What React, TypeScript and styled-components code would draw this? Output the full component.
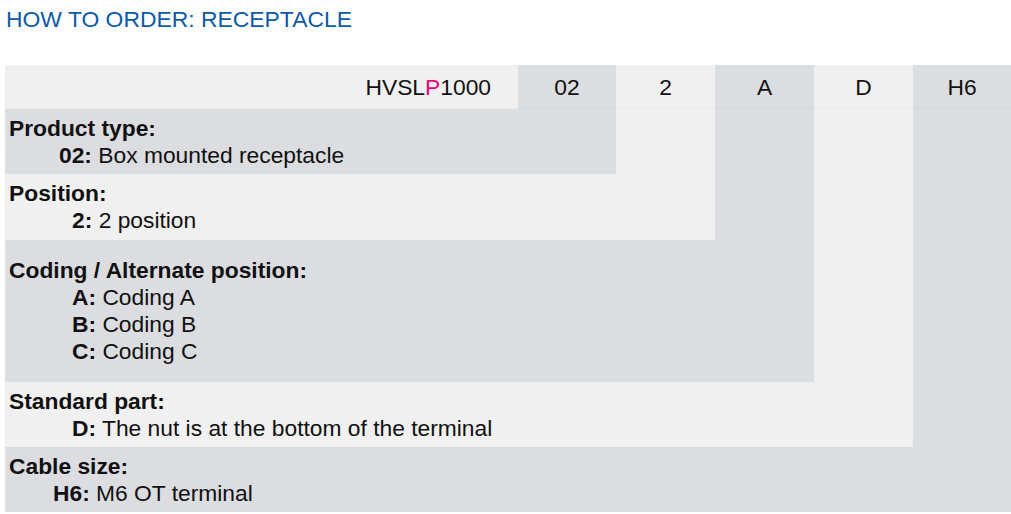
import React from "react";
import styled, { createGlobalStyle } from "styled-components";

const Global = createGlobalStyle`
  html, body { margin: 0; padding: 0; background: #ffffff; }
  body { font-family: "Liberation Sans", Arial, sans-serif; color: #111; }
`;

const LIGHT = "#f0f0f0";
const DARK = "#dcdde0";

const Page = styled.div`
  padding: 6px 0 0 5px;
  width: 1006px;
`;

const Title = styled.h1`
  margin: 0 0 0 1px;
  font-weight: normal;
  font-size: 22.9px;
  line-height: 26px;
  color: #0d5aa8;
  height: 59px;
`;

const Grid = styled.div`
  display: grid;
  grid-template-columns: 513px 98px 99px 99px 99px 98px;
  grid-template-rows: 44px 65px 66px 142px 65px 65px;
  font-size: 22.8px;
  line-height: 27px;
`;

const Cell = styled.div<{ $dark?: boolean; $col: string; $row: string }>`
  background: ${(p) => (p.$dark ? DARK : LIGHT)};
  grid-column: ${(p) => p.$col};
  grid-row: ${(p) => p.$row};
`;

const HeadCell = styled(Cell)<{ $right?: boolean }>`
  display: flex;
  align-items: center;
  justify-content: ${(p) => (p.$right ? "flex-end" : "center")};
  padding-right: ${(p) => (p.$right ? "27px" : "0")};
  box-shadow: inset 0 -1px 0 rgba(0, 0, 0, 0.025);
`;

const Accent = styled.span`
  color: #e6007e;
`;

const Desc = styled(Cell)`
  display: flex;
  flex-direction: column;
  justify-content: center;
  padding-left: 4px;
`;

const Heading = styled.div`
  font-weight: bold;
`;

const Option = styled.div<{ $indent: number }>`
  padding-left: ${(p) => p.$indent}px;
`;

const Code = styled.b`
  font-weight: bold;
`;

type Opt = { code: string; text: string; indent: number };
type Section = { heading: string; options: Opt[]; dark: boolean; span: number };

const sections: Section[] = [
  { heading: "Product type:", dark: true, span: 2, options: [{ code: "02", text: "Box mounted receptacle", indent: 50 }] },
  { heading: "Position:", dark: false, span: 3, options: [{ code: "2", text: "2 position", indent: 63 }] },
  {
    heading: "Coding / Alternate position:",
    dark: true,
    span: 4,
    options: [
      { code: "A", text: "Coding A", indent: 63 },
      { code: "B", text: "Coding B", indent: 63 },
      { code: "C", text: "Coding C", indent: 63 },
    ],
  },
  { heading: "Standard part:", dark: false, span: 5, options: [{ code: "D", text: "The nut is at the bottom of the terminal", indent: 63 }] },
  { heading: "Cable size:", dark: true, span: 6, options: [{ code: "H6", text: "M6 OT terminal", indent: 44 }] },
];

const codes = [
  { label: "02", dark: true },
  { label: "2", dark: false },
  { label: "A", dark: true },
  { label: "D", dark: false },
  { label: "H6", dark: true },
];

export default function App() {
  return (
    <>
      <Global />
      <Page>
        <Title>HOW TO ORDER: RECEPTACLE</Title>
        <Grid>
          <HeadCell $col="1" $row="1" $right>
            HVSL<Accent>P</Accent>1000
          </HeadCell>
          {codes.map((c, i) => (
            <HeadCell key={c.label} $col={String(i + 2)} $row="1" $dark={c.dark}>
              {c.label}
            </HeadCell>
          ))}
          {sections.map((s, i) => (
            <Desc key={s.heading} $dark={s.dark} $col={`1 / span ${s.span}`} $row={String(i + 2)}>
              <Heading>{s.heading}</Heading>
              {s.options.map((o) => (
                <Option key={o.code} $indent={o.indent}>
                  <Code>{o.code}:</Code> {o.text}
                </Option>
              ))}
            </Desc>
          ))}
          {codes.slice(1).map((c, i) => (
            <Cell key={"f" + c.label} $dark={c.dark} $col={String(i + 3)} $row={`2 / span ${i + 1}`} />
          ))}
        </Grid>
      </Page>
    </>
  );
}
